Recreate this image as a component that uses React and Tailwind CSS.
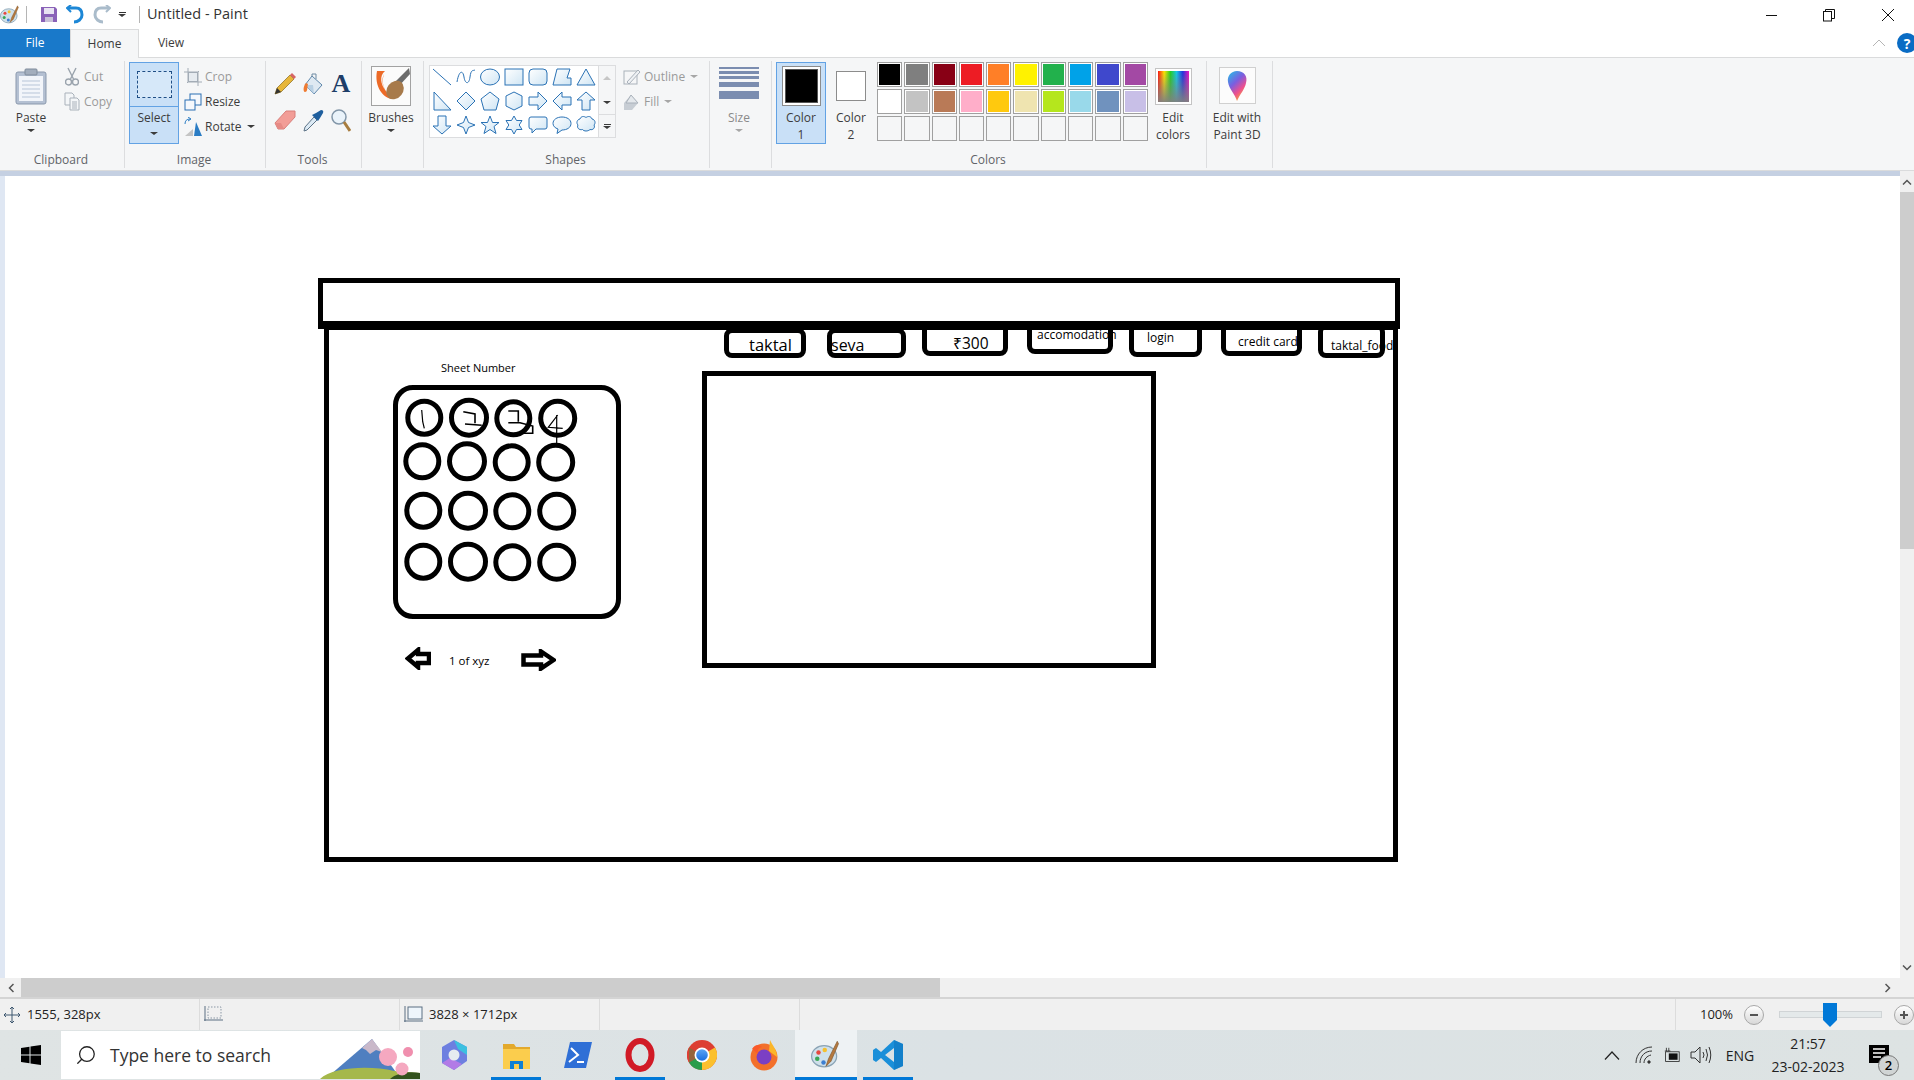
import { Search } from 'lucide-react';

const palette = [
  ['bg-[#000000]', 'bg-[#7f7f7f]', 'bg-[#880015]', 'bg-[#ed1c24]', 'bg-[#ff7f27]', 'bg-[#fff200]', 'bg-[#22b14c]', 'bg-[#00a2e8]', 'bg-[#3f48cc]', 'bg-[#a349a4]'],
  ['bg-[#ffffff]', 'bg-[#c3c3c3]', 'bg-[#b97a57]', 'bg-[#ffaec9]', 'bg-[#ffc90e]', 'bg-[#efe4b0]', 'bg-[#b5e61d]', 'bg-[#99d9ea]', 'bg-[#7092be]', 'bg-[#c8bfe7]'],
];

const shapes = [
  <path d="M1 2 L19 18" fill="none" />,
  <path d="M1 15 C3 3 7 3 8 10 S13 18 14 10 S17 4 19 3" fill="none" />,
  <ellipse cx="10" cy="10" rx="9.5" ry="8" />,
  <rect x="1" y="2" width="18" height="16" />,
  <rect x="1" y="2" width="18" height="16" rx="4" />,
  <path d="M5 2 H18 L15 11 H19 V18 H1 Z" />,
  <path d="M10 2 L19 18 H1 Z" />,
  <path d="M2 1 L19 19 H2 Z" />,
  <path d="M10 1 L19 10 L10 19 L1 10 Z" />,
  <path d="M10 1 L19 8 L16 19 H4 L1 8 Z" />,
  <path d="M10 1 L18 5 V15 L10 19 L2 15 V5 Z" />,
  <path d="M1 6 H10 V1 L19 10 L10 19 V14 H1 Z" />,
  <path d="M19 6 H10 V1 L1 10 L10 19 V14 H19 Z" />,
  <path d="M6 19 V9 H1 L10 1 L19 9 H14 V19 Z" />,
  <path d="M6 1 V11 H1 L10 19 L19 11 H14 V1 Z" />,
  <path d="M10 1 L12.5 7.5 L19 10 L12.5 12.5 L10 19 L7.5 12.5 L1 10 L7.5 7.5 Z" />,
  <path d="M10 1 L12.5 7.5 H19 L14 11.5 L16 18.5 L10 14.5 L4 18.5 L6 11.5 L1 7.5 H7.5 Z" />,
  <path d="M10 1 L12.5 5.5 H18 L15.2 10 L18 14.5 H12.5 L10 19 L7.5 14.5 H2 L4.8 10 L2 5.5 H7.5 Z" />,
  <path d="M3 2 H17 Q19 2 19 4 V12 Q19 14 17 14 H8 L4 18 V14 H3 Q1 14 1 12 V4 Q1 2 3 2 Z" />,
  <path d="M10 2 C15 2 19 4.5 19 8.5 C19 12.5 15 15 10 15 L5 18.5 L6 14 C3 13 1 11 1 8.5 C1 4.5 5 2 10 2 Z" />,
  <path d="M4 4 C5 1 8 1 10 2.5 C12 1 15 1 16 4 C19 4.5 20 8 18 10 C19.5 12.5 17 15.5 14 14.5 C12 16.5 8 16.5 6.5 14.5 C3 15.5 .5 12.5 2 10 C0 8 1 4.5 4 4 Z" />,
];

function Caret({ gray }) {
  return <span className={`block w-0 h-0 border-x-[4px] border-x-transparent border-t-[3px] ${gray ? 'border-t-[#a6a6a6]' : 'border-t-[#3b3b3b]'}`} />;
}

function Group({ width, label, children }) {
  return (
    <div className={`flex flex-col h-[107px] border-r border-[#dcdddf] shrink-0 ${width}`}>
      <div className="flex flex-1 pt-px min-h-0">{children}</div>
      <div className="h-[15px] leading-[13px] pr-[2px] text-center text-[12px] text-[#5f6368]">{label}</div>
    </div>
  );
}

function Large({ width, label, second, caret, gray, active, icon }) {
  return (
    <div className={`flex flex-col items-center h-[82px] shrink-0 border ${width} ${active ? 'bg-[#c9e0f7] border-[#62a2e4]' : 'border-transparent'}`}>
      <div className="flex items-center justify-center h-[46px] w-full">{icon}</div>
      <div className={`leading-[17px] text-[12px] text-center ${gray ? 'text-[#8a8a8a]' : 'text-[#3c3c3c]'}`}>{label}</div>
      {second && <div className="leading-[17px] text-[12px] text-center text-[#3c3c3c]">{second}</div>}
      {caret && <div className="mt-[3px]"><Caret gray={gray} /></div>}
    </div>
  );
}

function SmallRow({ icon, label, gray, caret }) {
  return (
    <div className="flex items-center h-[25px]">
      <div className="flex justify-center w-[20px] shrink-0">{icon}</div>
      <span className={`ml-[2px] text-[12px] ${gray ? 'text-[#9a9a9a]' : 'text-[#3c3c3c]'}`}>{label}</span>
      {caret && <span className="ml-[5px]"><Caret gray={gray} /></span>}
    </div>
  );
}

function PaintIcon({ size }) {
  return (
    <svg width={size} height={size} viewBox="0 0 24 24">
      <ellipse cx="10.5" cy="13" rx="10" ry="8.5" fill="#cfe0ea" stroke="#8aa3b5" />
      <circle cx="6" cy="10" r="1.8" fill="#e8483f" />
      <circle cx="11" cy="8" r="1.8" fill="#f5c02e" />
      <circle cx="5" cy="15" r="1.8" fill="#3aa655" />
      <circle cx="10" cy="18" r="1.8" fill="#3d7fd1" />
      <path d="M21 1 L14 15 L12 21 L16 17 L22 3 Z" fill="#b5793f" stroke="#7d5228" strokeWidth=".5" />
    </svg>
  );
}

function Ribbon() {
  return (
    <div className="flex h-[113px] py-[3px] border-t border-[#dadbdc] bg-[#f5f6f7] shrink-0">
      <Group width="w-[125px]" label="Clipboard">
        <Large width="w-[62px]" label="Paste" caret icon={
          <svg width="32" height="37" viewBox="0 0 32 37">
            <rect x="1" y="4" width="30" height="32" rx="2" fill="#b4c0d2" stroke="#8b99ad" />
            <rect x="4" y="8" width="24" height="25" fill="#f2f5fa" />
            <path d="M7 13 H25 M7 17 H25 M7 21 H25 M7 25 H25 M7 29 H25" stroke="#b7c5d8" />
            <rect x="10" y="1" width="12" height="6" rx="1" fill="#a3aebd" stroke="#7f8b9b" />
          </svg>
        } />
        <div className="flex flex-col pt-[2px] w-[62px]">
          <SmallRow gray label="Cut" icon={
            <svg width="14" height="19" viewBox="0 0 14 19" fill="none" stroke="#9aa3ad" strokeWidth="1.4">
              <path d="M3 1 L8.5 12 M11 1 L5.5 12" />
              <circle cx="3.5" cy="15" r="3" />
              <circle cx="10.5" cy="15" r="3" />
            </svg>
          } />
          <SmallRow gray label="Copy" icon={
            <svg width="16" height="19" viewBox="0 0 16 19" fill="#f4f6f8" stroke="#a9b1ba">
              <path d="M1 1 H8 L10 3 V13 H1 Z" />
              <path d="M6 6 H13 L15 8 V18 H6 Z" />
              <path d="M8 10 H13 M8 12 H13 M8 14 H13 M8 16 H13" />
            </svg>
          } />
        </div>
      </Group>

      <Group width="w-[141px]" label="Image">
        <div className="ml-[4px]">
          <div className="w-[50px] h-[82px] border border-[#62a2e4] bg-[#c9e0f7] flex flex-col items-center">
            <div className="flex items-center justify-center w-full h-[44px] border-b border-[#62a2e4]">
              <div className="w-[35px] h-[27px] border border-dashed border-[#1f4e85] bg-[#d6e8f9]" />
            </div>
            <div className="leading-[22px] text-[12px] text-[#3c3c3c]">Select</div>
            <div className="mt-[3px]"><Caret /></div>
          </div>
        </div>
        <div className="flex flex-col ml-[4px] pt-[2px]">
          <SmallRow gray label="Crop" icon={
            <svg width="18" height="18" viewBox="0 0 18 18" fill="none" stroke="#a3acb6">
              <path d="M4 0 V14 H18 M0 4 H14 V18 M3 15 L15 3" />
              <rect x="4.5" y="4.5" width="9" height="9" fill="#e6ebf0" />
            </svg>
          } />
          <SmallRow label="Resize" icon={
            <svg width="18" height="18" viewBox="0 0 18 18" fill="#f5f8fc" stroke="#2a6eb3">
              <rect x="6" y="1" width="11" height="11" />
              <rect x="1" y="7" width="10" height="10" />
            </svg>
          } />
          <SmallRow label="Rotate" caret icon={
            <svg width="18" height="19" viewBox="0 0 18 19">
              <path d="M1 19 L9 12 V19 Z" fill="#c4c4c4" />
              <path d="M12 5 L18 19 H10 Z" fill="#2a7cc4" />
              <path d="M1 7 Q1 2 6 2 M4 0 L7 2 L4 4" fill="none" stroke="#2a7cc4" />
            </svg>
          } />
        </div>
      </Group>

      <Group width="w-[96px]" label="Tools">
        <div className="ml-[5px] mt-[4px] grid grid-cols-[28px_28px_28px] grid-rows-[36px_36px] place-items-center h-[72px]">
          <svg width="22" height="22" viewBox="0 0 22 22">
            <path d="M1 21 L3 15 L16 2 L20 6 L7 19 Z" fill="#e7b63a" stroke="#8a6a1c" strokeWidth=".7" />
            <path d="M16 2 L18 0 L22 4 L20 6 Z" fill="#d76565" />
            <path d="M1 21 L3 15 L7 19 Z" fill="#333" />
          </svg>
          <svg width="20" height="22" viewBox="0 0 20 22">
            <path d="M9 3 L19 12 L11 21 L2 12 Z" fill="#dfe9f2" stroke="#5d86aa" />
            <path d="M2 12 L10 12 L11 21 Z" fill="#b9d0e3" />
            <path d="M9 4 V1 H13 V6" fill="none" stroke="#6e8ba3" />
            <path d="M3 10 C0 13 0 19 2 19 C5 19 4 14 5 11 Z" fill="#ef7b32" />
          </svg>
          <span className="[font-family:'Liberation_Serif',serif] font-bold text-[26px] leading-none text-[#1e3e68]">A</span>
          <svg width="22" height="20" viewBox="0 0 22 20">
            <path d="M1 13 L12 1 H21 L21 7 L10 19 H4 Z" fill="#f29d97" stroke="#d87f7b" />
            <path d="M1 13 L7 13 L10 19 H4 Z" fill="#e68a85" />
          </svg>
          <svg width="21" height="23" viewBox="0 0 21 23">
            <path d="M1 22 L2 18 L11 8 L14 11 L4 21 Z" fill="#dceaf5" stroke="#5c7387" />
            <path d="M9 6 L15 12 L17 9 L20 4 Q21 1 18 1 L13 4 Z" fill="#1f5f9e" />
          </svg>
          <svg width="20" height="23" viewBox="0 0 20 23">
            <circle cx="8" cy="8" r="7" fill="#eaf3fa" stroke="#8296a8" strokeWidth="1.5" />
            <path d="M13 13 L19 22" stroke="#a87d3f" strokeWidth="3" />
          </svg>
        </div>
      </Group>

      <Group width="w-[62px]" label="">
        <Large width="w-[58px]" label="Brushes" caret icon={
          <svg width="40" height="40" viewBox="0 0 40 40">
            <rect x=".5" y=".5" width="39" height="39" fill="#fbfbfb" stroke="#a2a2a2" />
            <path d="M38 2 L24 16 L28 20 L39 8 Z" fill="#6c6c6c" />
            <path d="M6 5 C3 20 12 34 24 33 C16 29 9 20 13 8 C10 14 12 20 14 24 C10 18 8 10 14 5 Z" fill="#ec6a27" />
            <ellipse cx="24" cy="24" rx="8" ry="10" transform="rotate(38 24 24)" fill="#a77a4b" />
          </svg>
        } />
      </Group>

      <Group width="w-[286px]" label="Shapes">
        <div className="flex ml-[5px] mt-[3px] h-[73px]">
          <div className="w-[170px] h-[73px] border border-[#dcdddf] bg-white grid grid-cols-[repeat(7,24px)] grid-rows-[22px_25px_24px] place-items-center">
            {shapes.map((shape, i) => (
              <svg key={i} width="20" height="20" viewBox="0 0 20 20" fill="url(#shapeFill)" stroke="#2a72b5">{shape}</svg>
            ))}
          </div>
          <div className="flex flex-col w-[17px] border border-l-0 border-[#dcdddf]">
            <div className="flex items-center justify-center h-[24px]">
              <span className="block w-0 h-0 border-x-[4px] border-x-transparent border-b-[4px] border-b-[#c6c6c6]" />
            </div>
            <div className="flex items-center justify-center h-[24px]">
              <Caret />
            </div>
            <div className="flex flex-col items-center justify-center gap-px h-[23px] border-t border-[#dcdddf]">
              <span className="block w-[7px] h-px bg-[#3b3b3b]" />
              <Caret />
            </div>
          </div>
        </div>
        <div className="flex flex-col ml-[6px] pt-[2px]">
          <SmallRow gray label="Outline" caret icon={
            <svg width="18" height="18" viewBox="0 0 18 18" fill="none" stroke="#a9b1ba">
              <rect x="1" y="3" width="13" height="13" />
              <path d="M4 14 L15 2 L17 4 L6 16 Z" fill="#eef1f4" />
            </svg>
          } />
          <SmallRow gray label="Fill" caret icon={
            <svg width="18" height="18" viewBox="0 0 18 18">
              <path d="M8 2 L15 10 L9 17 H1 V10 Z" fill="#c7cdd4" />
              <path d="M8 2 L15 10 H3 Z" fill="#e4e8ec" stroke="#a9b1ba" />
            </svg>
          } />
        </div>
      </Group>

      <Group width="w-[62px]" label="">
        <Large width="w-[58px]" label="Size" caret gray icon={
          <div className="flex flex-col w-[40px] self-start pt-[4px]">
            <div className="h-[2px] bg-[#7b8db0]" />
            <div className="h-[3px] mt-[2px] bg-[#7b8db0]" />
            <div className="h-[3px] mt-[2px] bg-[#7b8db0]" />
            <div className="h-[5px] mt-[3px] bg-[#7b8db0]" />
            <div className="h-[8px] mt-[4px] bg-[#7b8db0]" />
          </div>
        } />
      </Group>

      <Group width="w-[435px]" label="Colors">
        <div className="ml-[4px]">
          <Large width="w-[50px]" active label="Color" second="1" icon={
            <div className="w-[39px] h-[40px] border border-[#8c8c8c] p-[2px] bg-white">
              <div className="w-full h-full bg-black border border-[#555]" />
            </div>
          } />
        </div>
        <Large width="w-[50px]" label="Color" second="2" icon={
          <div className="w-[30px] h-[30px] border border-[#8c8c8c] bg-white" />
        } />
        <div className="ml-[1px] grid grid-cols-10 grid-rows-3 gap-[2px] w-[271px] h-[79px]">
          {palette.flat().map((color) => (
            <div key={color} className="border border-[#a0a0a0] p-[1px] bg-white">
              <div className={`w-full h-full ${color}`} />
            </div>
          ))}
          {Array.from({ length: 10 }, (_, i) => (
            <div key={i} className="border border-[#a0a0a0]" />
          ))}
        </div>
        <Large width="w-[50px]" label="Edit" second="colors" icon={
          <svg width="37" height="37" viewBox="0 0 37 37">
            <rect x=".5" y=".5" width="36" height="36" fill="#fff" stroke="#c4c4c4" />
            <rect x="3" y="3" width="31" height="31" fill="url(#rainbow)" />
            <rect x="3" y="3" width="31" height="31" fill="url(#rainbowFade)" />
          </svg>
        } />
      </Group>

      <Group width="w-[66px]" label="">
        <Large width="w-[60px]" label="Edit with" second="Paint 3D" icon={
          <svg width="37" height="38" viewBox="0 0 37 38">
            <rect x=".5" y=".5" width="36" height="36" fill="#fcfcfc" stroke="#d0d0d0" />
            <path d="M18 4 C25 4 29 9 27 16 C26 22 21 27 18 34 C16 27 10 22 9 15 C8 9 12 4 18 4 Z" fill="url(#drop)" />
          </svg>
        } />
      </Group>
    </div>
  );
}

function Circles() {
  const circles = [
    [31.3, 32.7, 16.5], [76, 32.7, 17.5], [120.3, 33.3, 16.5], [164.7, 33.3, 17],
    [29.3, 76.3, 16.5], [74, 76.3, 17.5], [118.7, 77.3, 16.5], [162.7, 77.3, 17],
    [30.3, 125.7, 16.5], [75, 125.7, 17.5], [119.3, 126.3, 16.5], [163.7, 126.3, 17],
    [30.3, 176.7, 16.5], [75, 176.7, 17.5], [119.3, 177.3, 16.5], [163.7, 177.3, 17],
  ];
  return (
    <svg className="absolute left-[388px] top-[209px]" width="228" height="234" viewBox="0 0 228 234" fill="none" stroke="#000">
      {circles.map(([cx, cy, r], i) => (
        <circle key={i} cx={cx} cy={cy} r={r} strokeWidth="5" />
      ))}
      {/* hand drawn numbers */}
      <path d="M28.7 25 L29.7 36.7 L31.3 43.3" strokeWidth="1.2" />
      <path d="M70.3 26.7 L82 29 L82 38.3 M72 39 L88.7 40.3" strokeWidth="1.6" />
      <path d="M115.3 26 H125.3 V36.7 M115.3 37.7 H127 L139.7 41 V48.3 H128.7" strokeWidth="1.6" />
      <path d="M164.7 30 L155.3 42.3 L169.7 43.3 M163.7 30 V58.3" strokeWidth="1.2" />
    </svg>
  );
}

function Sketch() {
  return (
    <div className="relative flex-1 bg-white overflow-hidden font-normal text-black">
      <div className="absolute left-[319px] top-[149px] w-[1074px] h-[537px] border-[5px] border-black" />
      <div className="absolute left-[719px] top-[152px] w-[82px] h-[30px] border-[5px] border-black rounded-[8px]" />
      <div className="absolute left-[822px] top-[152px] w-[79px] h-[30px] border-[5px] border-black rounded-[8px]" />
      <div className="absolute left-[917px] top-[146px] w-[86px] h-[34px] border-[5px] border-black rounded-[8px]" />
      <div className="absolute left-[1022px] top-[146px] w-[86px] h-[32px] border-[5px] border-black rounded-[8px]" />
      <div className="absolute left-[1124px] top-[146px] w-[73px] h-[35px] border-[5px] border-black rounded-[8px]" />
      <div className="absolute left-[1216px] top-[146px] w-[81px] h-[34px] border-[5px] border-black rounded-[8px]" />
      <div className="absolute left-[1313px] top-[148px] w-[67px] h-[34px] border-[5px] border-black rounded-[8px]" />
      <div className="absolute left-[313px] top-[102px] w-[1082px] h-[51px] border-[5px] border-b-[8px] border-black" />

      <span className="absolute left-[744px] top-[159px] text-[16.5px] leading-[20px]">taktal</span>
      <span className="absolute left-[826px] top-[159px] text-[16px] leading-[20px]">seva</span>
      <span className="absolute left-[948px] top-[157px] text-[15.5px] leading-[20px]">₹300</span>
      <span className="absolute left-[1032px] top-[151px] text-[12px] leading-[16px]">accomodation</span>
      <span className="absolute left-[1142px] top-[154px] text-[12px] leading-[16px]">login</span>
      <span className="absolute left-[1233px] top-[158px] text-[12px] leading-[16px]">credit card</span>
      <span className="absolute left-[1326px] top-[162px] text-[12px] leading-[16px]">taktal_food</span>

      <span className="absolute left-[436px] top-[184px] text-[11px] leading-[16px]">Sheet Number</span>
      <div className="absolute left-[388px] top-[209px] w-[228px] h-[234px] border-[5px] border-black rounded-[20px]" />
      <Circles />

      <svg className="absolute left-[400px] top-[471px]" width="26" height="23" viewBox="0 0 26 23" fill="#fff" stroke="#000" strokeWidth="4.5">
        <path d="M3 11.5 L13 3 V7 H24 V16 H13 V20 Z" />
      </svg>
      <span className="absolute left-[444px] top-[477px] text-[11.5px] leading-[16px]">1 of xyz</span>
      <svg className="absolute left-[516px] top-[473px]" width="35" height="22" viewBox="0 0 35 22" fill="#fff" stroke="#000" strokeWidth="4.5">
        <path d="M2.5 6.5 H20 V2.5 L32.5 11 L20 19.5 V15.5 H2.5 Z" />
      </svg>

      <div className="absolute left-[697px] top-[195px] w-[454px] h-[297px] border-[5px] border-black" />
    </div>
  );
}

function TaskIcon({ active, highlight, children }) {
  return (
    <div className={`relative flex items-center justify-center w-[62px] h-full ${highlight ? 'bg-[#eef2f4]' : ''}`}>
      {children}
      {active && <div className={`absolute bottom-0 h-[3px] bg-[#0078d7] ${highlight ? 'inset-x-0' : 'inset-x-[6px]'}`} />}
    </div>
  );
}

export default function App() {
  return (
    <div className="flex flex-col w-[1914px] h-[1080px] overflow-hidden bg-white text-[#222] [font-family:'Open_Sans',sans-serif]">
      <svg width="0" height="0" className="absolute">
        <defs>
          <linearGradient id="shapeFill" x1="0" y1="0" x2="1" y2="1">
            <stop offset="0" stopColor="#ffffff" />
            <stop offset="1" stopColor="#cfe5f4" />
          </linearGradient>
          <linearGradient id="rainbow" x1="0" y1="0" x2="1" y2="0">
            <stop offset="0" stopColor="#ff1010" />
            <stop offset=".2" stopColor="#ffe600" />
            <stop offset=".4" stopColor="#20d020" />
            <stop offset=".6" stopColor="#10c8e8" />
            <stop offset=".8" stopColor="#2030e0" />
            <stop offset="1" stopColor="#f010c0" />
          </linearGradient>
          <linearGradient id="rainbowFade" x1="0" y1="0" x2="0" y2="1">
            <stop offset="0" stopColor="#808080" stopOpacity="0" />
            <stop offset="1" stopColor="#808080" stopOpacity=".95" />
          </linearGradient>
          <linearGradient id="drop" x1="0" y1="0" x2=".6" y2="1">
            <stop offset="0" stopColor="#1fc4e8" />
            <stop offset=".45" stopColor="#7a5ee0" />
            <stop offset=".75" stopColor="#ee4f8f" />
            <stop offset="1" stopColor="#f3a43a" />
          </linearGradient>
          <linearGradient id="chromeBlue" x1="0" y1="0" x2="0" y2="1">
            <stop offset="0" stopColor="#5aa4f5" />
            <stop offset="1" stopColor="#1a6fe0" />
          </linearGradient>
        </defs>
      </svg>

      {/* title bar */}
      <div className="flex items-center h-[29px] shrink-0 relative">
        <div className="w-[26px] shrink-0"><PaintIcon size={20} /></div>
        <div className="w-px h-[17px] bg-[#b5b5b5]" />
        <svg className="ml-[14px]" width="16" height="15" viewBox="0 0 16 15">
          <path d="M0 0 H14 L16 2 V15 H0 Z" fill="#8a62b8" />
          <rect x="3" y="1" width="10" height="6" fill="#e8e3f2" />
          <rect x="4" y="10" width="8" height="5" fill="#c9c1d8" />
        </svg>
        <svg className="ml-[9px]" width="18" height="19" viewBox="0 0 18 19" fill="none" stroke="#1d87d6" strokeWidth="3">
          <path d="M2 3 H10 C15 3 16 7 16 10 C16 14 12 17 8 17" />
          <path d="M5 0 L1 3 L5 7" strokeWidth="2" />
        </svg>
        <svg className="ml-[9px]" width="18" height="19" viewBox="0 0 18 19" fill="none" stroke="#aabccb" strokeWidth="3">
          <path d="M16 3 H8 C3 3 2 7 2 10 C2 14 6 17 10 17" />
          <path d="M13 0 L17 3 L13 7" strokeWidth="2" />
        </svg>
        <div className="ml-[7px] flex flex-col items-center gap-px">
          <span className="block w-[7px] h-px bg-[#333]" />
          <Caret />
        </div>
        <div className="ml-[13px] w-px h-[17px] bg-[#b5b5b5]" />
        <span className="ml-[7px] text-[14.5px] leading-none text-[#333]">Untitled - Paint</span>
        <div className="ml-auto flex items-center">
          <svg width="148" height="14" viewBox="0 0 148 14" fill="none" stroke="#111">
            <path d="M0 7.5 H11" />
            <rect x="57.5" y="3.5" width="8" height="9.5" />
            <path d="M59.5 3 V1.5 H68.5 V10.5 H66" />
            <path d="M116 1 L128 13 M128 1 L116 13" />
          </svg>
        </div>
      </div>

      {/* tabs */}
      <div className="flex items-end h-[28px] shrink-0 text-[12px] relative z-10">
        <div className="flex items-center justify-center w-[70px] h-[28px] bg-[#1979ca] text-white">File</div>
        <div className="flex items-center justify-center w-[69px] h-[29px] -mb-px bg-[#f5f6f7] border-x border-t border-[#dadbdc] text-[#3c3c3c]">Home</div>
        <div className="flex items-center justify-center w-[64px] h-[28px] text-[#3c3c3c]">View</div>
        <div className="ml-auto flex items-center h-[28px]">
          <svg width="14" height="8" viewBox="0 0 14 8" fill="none" stroke="#b5b5b5"><path d="M1 7 L7 1 L13 7" /></svg>
          <div className="ml-[11px] -mr-[3px] flex items-center justify-center w-[20px] h-[20px] rounded-full bg-[#0a6cc4] text-white font-bold text-[14px]">?</div>
        </div>
      </div>

      <Ribbon />

      {/* workspace */}
      <div className="flex flex-1 min-h-0 border-t border-[#dadbdc]">
        <div className="flex flex-col flex-1 min-w-0">
          <div className="h-[5px] bg-[#c5d0e2] shrink-0" />
          <div className="flex flex-1 min-h-0">
            <div className="w-[5px] bg-[#dfe7f3] shrink-0" />
            <Sketch />
          </div>
        </div>
        <div className="flex flex-col w-[14px] shrink-0 bg-[#f0f0f0]">
          <div className="flex items-center justify-center h-[21px]">
            <svg width="10" height="6" viewBox="0 0 10 6" fill="none" stroke="#555" strokeWidth="1.5"><path d="M1 5.5 L5 1.5 L9 5.5" /></svg>
          </div>
          <div className="h-[357px] bg-[#cdcdcd]" />
          <div className="flex flex-1 items-end justify-center pb-[7px]">
            <svg width="10" height="6" viewBox="0 0 10 6" fill="none" stroke="#555" strokeWidth="1.5"><path d="M1 .5 L5 4.5 L9 .5" /></svg>
          </div>
        </div>
      </div>

      {/* horizontal scrollbar */}
      <div className="flex items-center h-[19px] shrink-0 bg-[#f0f0f0]">
        <div className="flex items-center justify-center w-[21px]">
          <svg width="6" height="10" viewBox="0 0 6 10" fill="none" stroke="#555" strokeWidth="1.5"><path d="M5.5 1 L1.5 5 L5.5 9" /></svg>
        </div>
        <div className="w-[919px] h-full bg-[#cdcdcd]" />
        <div className="ml-auto mr-[23px]">
          <svg width="6" height="10" viewBox="0 0 6 10" fill="none" stroke="#555" strokeWidth="1.5"><path d="M.5 1 L4.5 5 L.5 9" /></svg>
        </div>
      </div>

      {/* status bar */}
      <div className="flex items-center h-[33px] shrink-0 bg-[#f0f0f0] border-t-2 border-[#d4d4d4] text-[13px] text-[#222]">
        <div className="flex items-center w-[200px] h-full border-r border-[#dcdcdc] pl-[3px]">
          <svg width="18" height="18" viewBox="0 0 18 18" fill="none" stroke="#3f5870">
            <path d="M9 1 V17 M1 9 H17 M7 3 L9 1 L11 3 M7 15 L9 17 L11 15 M3 7 L1 9 L3 11 M15 7 L17 9 L15 11" />
          </svg>
          <span className="ml-[6px]">1555, 328px</span>
        </div>
        <div className="flex items-center w-[200px] h-full border-r border-[#dcdcdc] pl-[4px]">
          <svg width="20" height="20" viewBox="0 0 20 20" fill="none" stroke="#5a6e82">
            <path d="M1 1 V16 M0 15 H19" />
            <rect x="4" y="2" width="13" height="11" strokeDasharray="1.5 1.5" stroke="#8a97a5" />
          </svg>
        </div>
        <div className="flex items-center w-[200px] h-full border-r border-[#dcdcdc] pl-[4px]">
          <svg width="20" height="20" viewBox="0 0 20 20" fill="#eef5fb" stroke="#5a6e82">
            <path d="M1 1 V17 M0 16 H19" fill="none" />
            <rect x="4" y="2" width="14" height="12" />
          </svg>
          <span className="ml-[5px]">3828 × 1712px</span>
        </div>
        <div className="w-[200px] h-full border-r border-[#dcdcdc]" />
        <div className="flex items-center ml-auto h-full border-l border-[#dcdcdc] pl-[24px] pr-0 w-[239px]">
          <span className="w-[44px]">100%</span>
          <div className="flex items-center justify-center w-[20px] h-[20px] rounded-full border border-[#a8a8a8] bg-gradient-to-b from-white to-[#d8d8d8] text-[#444]">
            <span className="block w-[8px] h-[2px] bg-[#555]" />
          </div>
          <div className="relative ml-[15px] w-[104px] h-[7px] bg-[#e4e9ea] border border-[#d0d4d6]">
            <svg className="absolute left-[43px] -top-[9px]" width="14" height="24" viewBox="0 0 14 24" fill="#0078d7">
              <path d="M0 0 H14 V17 L7 24 L0 17 Z" />
            </svg>
          </div>
          <div className="relative ml-[12px] flex items-center justify-center w-[20px] h-[20px] rounded-full border border-[#a8a8a8] bg-gradient-to-b from-white to-[#d8d8d8]">
            <span className="absolute block w-[8px] h-[2px] bg-[#555]" />
            <span className="absolute block w-[2px] h-[8px] bg-[#555]" />
          </div>
        </div>
      </div>

      {/* taskbar */}
      <div className="flex items-center h-[50px] shrink-0 bg-gradient-to-r from-[#dfe4e4] via-[#dbe2e5] to-[#dde3e3]">
        <div className="flex items-center justify-center w-[61px] h-full">
          <svg width="20" height="20" viewBox="0 0 20 20" fill="#000">
            <path d="M0 3 L8.5 1.7 V9.5 H0 Z M9.5 1.5 L20 0 V9.5 H9.5 Z M0 10.5 H8.5 V18.3 L0 17 Z M9.5 10.5 H20 V20 L9.5 18.5 Z" />
          </svg>
        </div>
        <div className="relative flex items-center w-[359px] h-[48px] bg-white overflow-hidden">
          <Search className="ml-[14px] -scale-x-100" size={22} strokeWidth={1.4} color="#222" />
          <span className="ml-[13px] text-[17.5px] text-[#333]">Type here to search</span>
          <svg className="absolute right-0 bottom-0" width="100" height="42" viewBox="0 0 100 42">
            <path d="M10 38 L52 2 L78 38 Z" fill="#4f7fc0" />
            <path d="M42 11 L52 2 L62 15 L56 13 L50 17 L46 13 Z" fill="#c9b8c9" />
            <path d="M0 42 C12 30 50 28 74 34 L100 36 V42 Z" fill="#a5b84b" />
            <path d="M70 42 C76 36 90 34 100 36 V42 Z" fill="#33521e" />
            <circle cx="68" cy="20" r="9" fill="#f5a8c0" />
            <circle cx="82" cy="32" r="6.5" fill="#f5a8c0" />
            <circle cx="88" cy="15" r="5" fill="#f08fae" />
          </svg>
        </div>
        <div className="flex items-center h-full ml-[3px]">
          <TaskIcon>
            <svg width="28" height="32" viewBox="0 0 28 32">
              <path d="M14 1 L27 8 V22 L14 31 L2 24 V8 Z" fill="#6d7fe0" />
              <path d="M14 1 L27 8 V16 L18 10 Z" fill="#3cc0e0" />
              <path d="M2 24 L14 31 L22 25 L10 19 Z" fill="#b27be6" />
              <circle cx="14" cy="16" r="5.5" fill="#e6ecf0" />
            </svg>
          </TaskIcon>
          <TaskIcon active>
            <svg width="27" height="27" viewBox="0 0 27 27">
              <path d="M0 2 H11 L13 5 H27 V10 H0 Z" fill="#e3a92c" />
              <rect y="7" width="27" height="20" fill="#fbcd4d" />
              <rect x="7" y="19" width="13" height="8" fill="#0f7fd4" />
              <rect x="11" y="22" width="5" height="5" fill="#fbcd4d" />
            </svg>
          </TaskIcon>
          <TaskIcon>
            <svg width="28" height="26" viewBox="0 0 28 26">
              <path d="M6 0 H28 L22 26 H0 Z" fill="#2f6fd6" />
              <path d="M7 6 L14 13 L5 20" fill="none" stroke="#fff" strokeWidth="2" />
              <path d="M13 20 H20" stroke="#fff" strokeWidth="2" />
            </svg>
          </TaskIcon>
          <TaskIcon active>
            <svg width="30" height="34" viewBox="0 0 30 34">
              <ellipse cx="15" cy="17" rx="11.5" ry="14" fill="none" stroke="#d11a26" strokeWidth="6" />
            </svg>
          </TaskIcon>
          <TaskIcon>
            <svg width="30" height="30" viewBox="0 0 30 30">
              <circle cx="15" cy="15" r="15" fill="#dd3f33" />
              <path d="M15 15 L2 22.5 A15 15 0 0 1 2 7.5 Z" fill="#dd3f33" />
              <path d="M15 15 L28 7.5 A15 15 0 0 1 15 30 Z" fill="#fbc02d" />
              <path d="M15 15 L15 30 A15 15 0 0 1 2 22.5 Z" fill="#2a9d4b" />
              <path d="M15 15 L2 7.5 V22.5 Z" fill="#2a9d4b" opacity=".4" />
              <circle cx="15" cy="15" r="7.5" fill="#fff" />
              <circle cx="15" cy="15" r="5.8" fill="url(#chromeBlue)" />
            </svg>
          </TaskIcon>
          <TaskIcon>
            <svg width="30" height="32" viewBox="0 0 30 32">
              <circle cx="15" cy="18" r="13.5" fill="#f3702b" />
              <path d="M21 1 C23 6 28 10 28 18 L20 12 Z" fill="#fbb62a" />
              <circle cx="15" cy="18" r="7.5" fill="#7b3fc4" />
              <path d="M3 10 C6 5 10 5 13 8 C9 9 8 12 9 15 Z" fill="#fa5a2a" />
            </svg>
          </TaskIcon>
          <TaskIcon active highlight>
            <PaintIcon size={30} />
          </TaskIcon>
          <TaskIcon active>
            <svg width="30" height="30" viewBox="0 0 30 30">
              <path d="M21 0 L30 4 V26 L21 30 L8 18 L3 22 L0 20 V10 L3 8 L8 12 Z M21 8 L12 15 L21 22 Z" fill="#1a8fd9" fillRule="evenodd" />
              <path d="M21 0 L30 4 V26 L21 30 Z" fill="#0f74bd" fillOpacity=".55" />
            </svg>
          </TaskIcon>
        </div>
        <div className="ml-auto flex items-center h-full text-[#222] text-[14px]">
          <div className="flex justify-center w-[24px]">
            <svg width="16" height="9" viewBox="0 0 16 9" fill="none" stroke="#222" strokeWidth="1.2"><path d="M1 8.5 L8 1 L15 8.5" /></svg>
          </div>
          <div className="flex justify-center w-[40px]">
            <svg width="18" height="18" viewBox="0 0 18 18" fill="none" stroke="#333">
              <path d="M1 17 C1 8 8 1 17 1 M5 17 C5 10 10 5 17 5 M9 17 C9 13 12 10 16 9" />
              <circle cx="14" cy="16" r="1.2" fill="#333" />
            </svg>
          </div>
          <div className="flex justify-center w-[16px]">
            <svg width="20" height="18" viewBox="0 0 20 18">
              <rect x="2" y="5" width="17" height="12" fill="none" stroke="#222" />
              <rect x="6" y="7" width="11" height="8" fill="#111" />
              <path d="M3 0 V4 M6 0 V4 M1 4 H8" stroke="#222" />
            </svg>
          </div>
          <div className="flex justify-center w-[42px]">
            <svg width="22" height="20" viewBox="0 0 22 20" fill="none" stroke="#333">
              <path d="M1 7 H5 L10 2 V18 L5 13 H1 Z" />
              <path d="M13 7 Q15 10 13 13 M16 4 Q19 10 16 16 M19 2 Q22.5 10 19 18" />
            </svg>
          </div>
          <div className="w-[36px] text-center">ENG</div>
          <div className="flex flex-col items-center w-[100px] leading-[23px]">
            <span>21:57</span>
            <span>23-02-2023</span>
          </div>
          <div className="relative w-[56px] h-full">
            <svg className="absolute left-[11px] top-[15px]" width="20" height="18" viewBox="0 0 20 18">
              <rect width="20" height="18" fill="#000" />
              <path d="M4 4 H16 M4 8 H16 M4 12 H12" stroke="#fff" strokeWidth="1.4" />
            </svg>
            <div className="absolute left-[20px] top-[25px] flex items-center justify-center w-[21px] h-[21px] rounded-full bg-[#d0d4d4] border border-[#777] text-[13px] font-semibold text-black">2</div>
          </div>
        </div>
      </div>
    </div>
  );
}
